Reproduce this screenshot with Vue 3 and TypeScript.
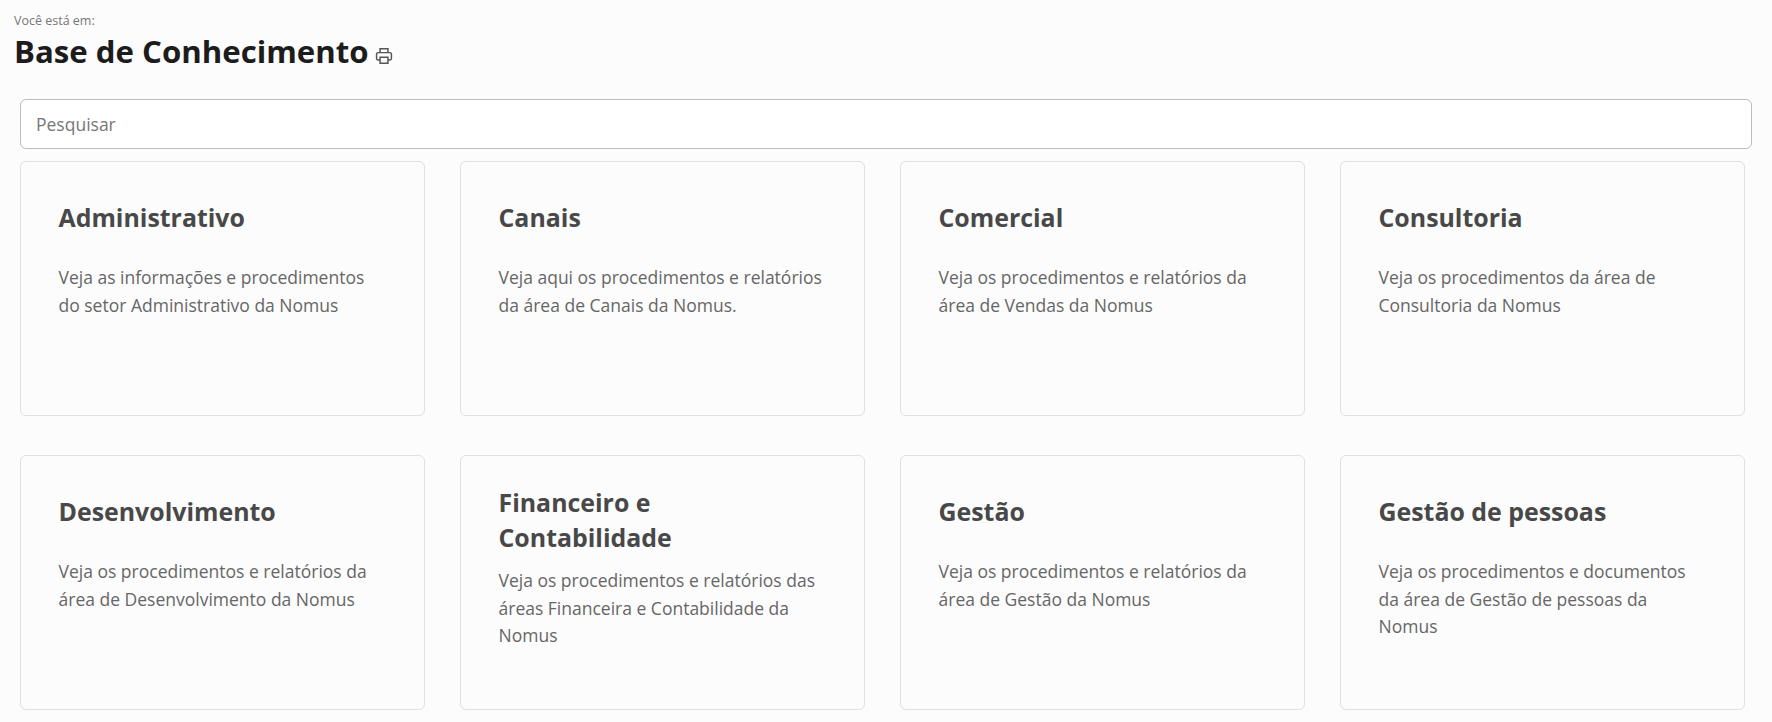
<script setup lang="ts">
const areas = [
  { title: 'Administrativo', text: 'Veja as informações e procedimentos do setor Administrativo da Nomus' },
  { title: 'Canais', text: 'Veja aqui os procedimentos e relatórios da área de Canais da Nomus.' },
  { title: 'Comercial', text: 'Veja os procedimentos e relatórios da área de Vendas da Nomus' },
  { title: 'Consultoria', text: 'Veja os procedimentos da área de Consultoria da Nomus' },
  { title: 'Desenvolvimento', text: 'Veja os procedimentos e relatórios da área de Desenvolvimento da Nomus' },
  { title: 'Financeiro e Contabilidade', text: 'Veja os procedimentos e relatórios das áreas Financeira e Contabilidade da Nomus', tall: true },
  { title: 'Gestão', text: 'Veja os procedimentos e relatórios da área de Gestão da Nomus' },
  { title: 'Gestão de pessoas', text: 'Veja os procedimentos e documentos da área de Gestão de pessoas da Nomus' },
]
</script>

<template>
  <div class="page">
    <header class="top">
      <div class="crumb">Você está em:</div>
      <div class="title-row">
        <h1>Base de Conhecimento</h1>
        <svg class="print" viewBox="0 0 16 16" width="18" height="18" fill="none" stroke="#555" stroke-width="1.3">
          <path d="M4.5 5V1.6h7V5" />
          <path d="M4.5 11.5H2.6a1.2 1.2 0 0 1-1.2-1.2V6.4a1.4 1.4 0 0 1 1.4-1.4h10.4a1.4 1.4 0 0 1 1.4 1.4v3.9a1.2 1.2 0 0 1-1.2 1.2h-1.9" />
          <path d="M4.5 9.2h7v5.2h-7z" />
        </svg>
      </div>
    </header>

    <main class="content">
      <input class="search" type="text" placeholder="Pesquisar" />
      <div class="grid">
        <article v-for="area in areas" :key="area.title" class="card">
          <h2 :class="{ tall: area.tall }">{{ area.title }}</h2>
          <p>{{ area.text }}</p>
        </article>
      </div>
    </main>
  </div>
</template>

<style>
html,
body {
  background: #fcfcfc;
}
</style>

<style scoped>
.page {
  width: 1772px;
  height: 722px;
  overflow: hidden;
  font-family: "Open Sans", "Noto Sans", sans-serif;
  background: #fcfcfc;
}

/* header */

.top {
  padding: 13px 14px 0;
}

.crumb {
  font-size: 12.5px;
  line-height: 16px;
  color: #777;
}

.title-row {
  display: flex;
  align-items: center;
  gap: 6px;
  margin-top: 2px;
}

h1 {
  margin: 0;
  font-size: 31.2px;
  line-height: 40px;
  font-weight: 700;
  color: #1c1c1c;
}

.print {
  margin-top: 10px;
}

/* content */

.content {
  padding: 28px 20px 0;
}

.search {
  display: block;
  box-sizing: border-box;
  width: 1732px;
  height: 50px;
  padding: 0 15px 1px;
  font-family: inherit;
  font-size: 17.5px;
  color: #444;
  background: #fff;
  border: 1px solid #bdbdbd;
  border-radius: 6px;
  outline: none;
}

.search::placeholder {
  color: #777;
  opacity: 1;
}

.grid {
  display: grid;
  grid-template-columns: repeat(4, 405px);
  grid-auto-rows: 255px;
  column-gap: 35px;
  row-gap: 39px;
  margin-top: 12px;
}

.card {
  box-sizing: border-box;
  padding: 29px 37px 0 37.5px;
  border: 1px solid #e0e0e0;
  border-radius: 6px;
}

.card h2 {
  margin: 9px 0 29px;
  font-size: 24.9px;
  line-height: 35px;
  font-weight: 700;
  color: #484848;
}

.card h2.tall {
  margin: 0 0 12px;
}

.card p {
  margin: 0;
  font-size: 17.5px;
  line-height: 27.5px;
  color: #666;
}
</style>
